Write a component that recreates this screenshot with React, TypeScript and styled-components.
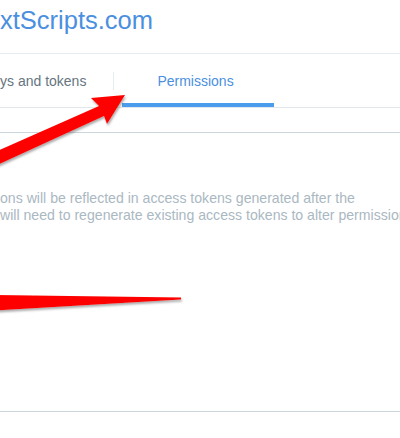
import React from "react";
import styled, { createGlobalStyle } from "styled-components";

const Global = createGlobalStyle`
  html, body { margin: 0; padding: 0; background: #ffffff; }
  body { font-family: "Liberation Sans", Arial, sans-serif; overflow: hidden; }
  * { box-sizing: border-box; }
`;

const Page = styled.div`
  position: relative;
  width: 400px;
  height: 438px;
  overflow: hidden;
  background: #ffffff;
`;

const Header = styled.header`
  height: 54px;
  padding-top: 5px;
  border-bottom: 1px solid #e6ecf0;
`;

const Title = styled.h1`
  margin: 0;
  font-size: 25.5px;
  line-height: 30px;
  font-weight: 400;
  color: #4a8fe0;
  white-space: nowrap;
`;

const TabBar = styled.nav`
  display: flex;
  align-items: center;
  height: 54px;
  border-bottom: 1px solid #e1e8ed;
`;

const Tab = styled.div<{ $active?: boolean }>`
  height: 53px;
  line-height: 54px;
  font-size: 14px;
  white-space: nowrap;
  color: ${(p) => (p.$active ? "#4a8fe0" : "#66757f")};
  padding: ${(p) => (p.$active ? "0 40px 0 35px" : "0 27px 0 0")};
  margin-left: ${(p) => (p.$active ? "8px" : "0")};
  box-shadow: ${(p) => (p.$active ? "inset 0 -4px 0 #4b9cec" : "none")};
`;

const Divider = styled.span`
  width: 1px;
  height: 18px;
  background: #e6ecf0;
`;

const Card = styled.section`
  margin-top: 24px;
  height: 280px;
  border-top: 1px solid #ccd6dd;
  border-bottom: 1px solid #ccd6dd;
  padding-top: 57px;
`;

const Note = styled.p`
  margin: 0;
  font-size: 14.1px;
  line-height: 17px;
  color: #aab8c2;
  white-space: nowrap;
`;

const Overlay = styled.svg`
  position: absolute;
  left: 0;
  top: 0;
  pointer-events: none;
`;

export default function App() {
  return (
    <Page>
      <Global />
      <Header>
        <Title>xtScripts.com</Title>
      </Header>
      <TabBar>
        <Tab>ys and tokens</Tab>
        <Divider />
        <Tab $active>Permissions</Tab>
      </TabBar>
      <Card>
        <Note>
          ons will be reflected in access tokens generated after the
          <br />
          will need to regenerate existing access tokens to alter permissions.
        </Note>
      </Card>
      <Overlay width="400" height="438" viewBox="0 0 400 438">
        <defs>
          <filter id="sh" x="-20%" y="-20%" width="140%" height="160%">
            <feDropShadow dx="1" dy="2" stdDeviation="1" floodColor="#555" floodOpacity="0.5" />
          </filter>
        </defs>
        <polygon
          points="-5,152 99,106 91,98 125,95 107,124 104,116 -5,166"
          fill="#ff0000"
          filter="url(#sh)"
        />
        <polygon
          points="-5,295 181,297.5 181,299.5 -5,310.5"
          fill="#ff0000"
          filter="url(#sh)"
        />
      </Overlay>
    </Page>
  );
}
